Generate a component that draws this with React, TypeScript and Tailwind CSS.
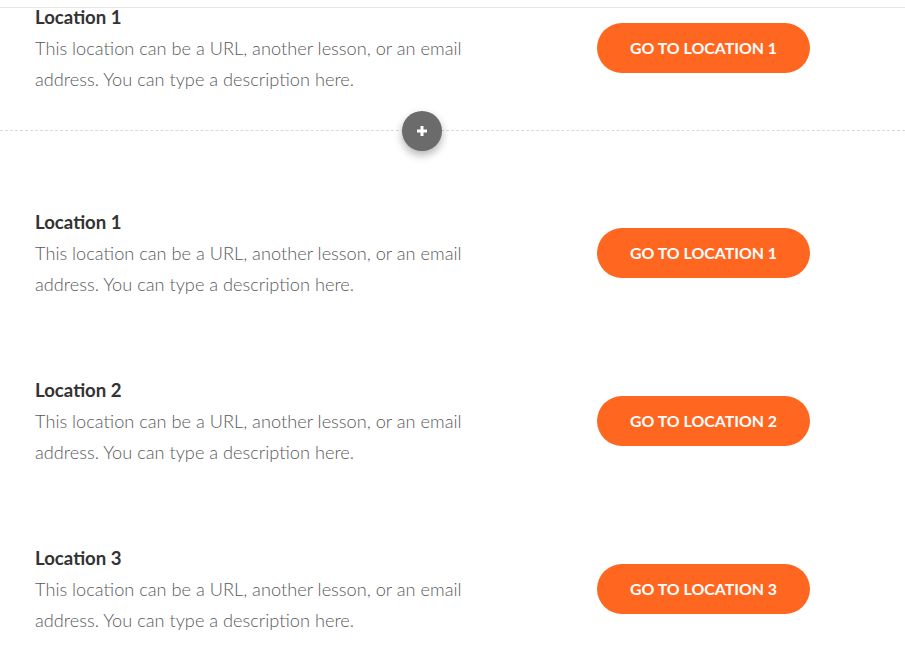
import React from 'react';

interface LocationRowProps {
  title: string;
  button: string;
}

const LocationRow: React.FC<LocationRowProps> = ({ title, button }) => (
  <div className="flex items-center pl-[35px]">
    <div className="w-[562px]">
      <h3 className="text-[18.6px] leading-[24px] font-bold text-[#333333]">{title}</h3>
      <p className="mt-[4px] w-[440px] text-[18.2px] leading-[31px] font-light text-[#5a5a5a] font-['Lato_Light',Lato,sans-serif]">
        This location can be a URL, another lesson, or an email address. You can type a description here.
      </p>
    </div>
    <button className="w-[213px] h-[50px] rounded-full bg-[#ff6620] text-white text-[15.9px] font-bold uppercase -mt-[5px]">
      {button}
    </button>
  </div>
);

const App: React.FC = () => {
  return (
    <div className="relative min-h-screen bg-white overflow-hidden font-['Lato','Open_Sans',sans-serif]">
      <div className="absolute left-0 right-0 top-[7px] h-px bg-[#e6e6e6] z-10" />

      <div className="pt-[5px] pb-[35px]">
        <LocationRow title="Location 1" button="Go to Location 1" />
      </div>

      <div className="relative border-t border-dashed border-[#d9d9d9]">
        <button className="absolute left-[402px] -top-[20px] w-[40px] h-[40px] rounded-full bg-[#6b6b6b] shadow-[0_4px_8px_rgba(0,0,0,0.3)] flex items-center justify-center">
          <svg width="12" height="12" viewBox="0 0 12 12">
            <path d="M6 1v10M1 6h10" stroke="white" strokeWidth="3" />
          </svg>
        </button>
      </div>

      <div className="flex flex-col gap-[78px] pt-[79px]">
        <LocationRow title="Location 1" button="Go to Location 1" />
        <LocationRow title="Location 2" button="Go to Location 2" />
        <LocationRow title="Location 3" button="Go to Location 3" />
      </div>
    </div>
  );
};

export default App;
